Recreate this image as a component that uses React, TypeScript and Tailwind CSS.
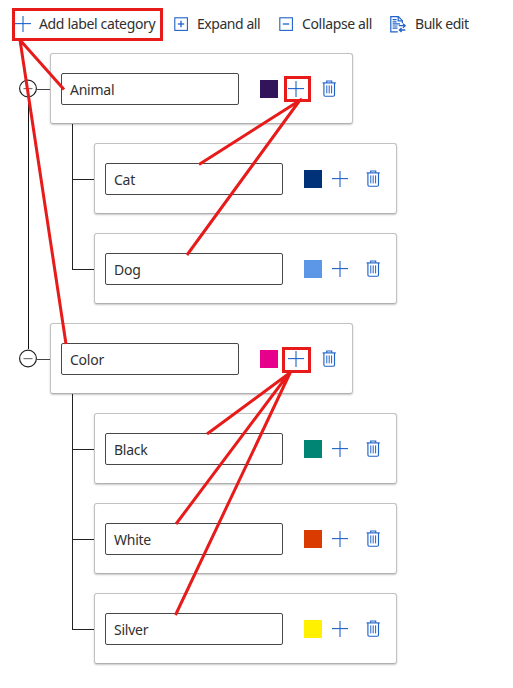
import type { ReactNode } from 'react';

const BLUE = '#1f62c9';

function PlusIcon() {
  return (
    <svg width="16" height="16" viewBox="0 0 16 16" className="block shrink-0" stroke={BLUE} fill="none">
      <path d="M0 7.6H16" strokeWidth="1.1" />
      <path d="M8 0V16" strokeWidth="1.1" />
    </svg>
  );
}

function BoxIcon({ plus }: { plus?: boolean }) {
  return (
    <svg width="14" height="14" viewBox="0 0 14 14" className="block shrink-0" stroke={BLUE} fill="none">
      <rect x="0.8" y="0.8" width="12.6" height="12.6" strokeWidth="1.1" />
      <path d="M3.8 7H10.2" strokeWidth="1.3" />
      {plus && <path d="M7 3.8V10.2" strokeWidth="1.3" />}
    </svg>
  );
}

function BulkIcon() {
  return (
    <svg width="16" height="17" viewBox="0 0 16 17" className="block shrink-0" stroke={BLUE} fill="none" strokeWidth="1.2">
      <path d="M7.8 15.9H0.8V0.7H8.4L12.4 4.7V7.2" />
      <path d="M8.2 0.9V4.8H12" />
      <path d="M2.6 3.7H6.6M2.6 5.8H6.6M2.6 7.9H10M2.6 10H7.5M2.6 12.1H7.5" />
      <path d="M8.8 9.7H15M13 7.7L15.2 9.7L13 11.7" strokeWidth="1.3" />
      <path d="M15.3 14H9.6M11.6 12L9.4 14L11.6 16" strokeWidth="1.3" />
    </svg>
  );
}

function TrashIcon() {
  return (
    <svg width="14" height="17" viewBox="0 0 14 17" className="block shrink-0" stroke={BLUE} fill="none" strokeWidth="1.15">
      <path d="M0.6 2.9H13.8" />
      <path d="M4.7 2.7V1H9.7V2.7" />
      <path d="M1.9 3V15Q1.9 16.2 3.2 16.2H11.2Q12.5 16.2 12.5 15V3" />
      <path d="M4.8 5.4V13.4M7.2 5.4V13.4M9.6 5.4V13.4" strokeWidth="1" />
    </svg>
  );
}

function Card({ name, swatch }: { name: string; swatch: string }) {
  return (
    <div className="flex h-[71px] w-[303px] shrink-0 items-center rounded-[3px] border border-[#c2c2c2] border-b-[#b0b0b0] pl-[10px] shadow-[0_1px_2px_rgba(0,0,0,0.22)]">
      <div className="flex h-8 w-[178px] items-center rounded-[2px] border border-[#484848] pl-2 pt-[2px] text-[14px] tracking-[-0.25px]">
        {name}
      </div>
      <div className={`ml-[21px] h-[18px] w-[18px] ${swatch}`} />
      <div className="ml-[10px]"><PlusIcon /></div>
      <div className="ml-[18px]"><TrashIcon /></div>
    </div>
  );
}

function Child({ name, swatch, last }: { name: string; swatch: string; last?: boolean }) {
  return (
    <div className="flex h-[90px]">
      <div className="ml-[22px] flex w-[22px] flex-col">
        <div className="h-[56px] shrink-0 border-b border-l border-[#222]" />
        {!last && <div className="flex-1 border-l border-[#222]" />}
      </div>
      <div className="pt-[19px]"><Card name={name} swatch={swatch} /></div>
    </div>
  );
}

function Group({ name, swatch, first, children }: { name: string; swatch: string; first?: boolean; children: ReactNode }) {
  return (
    <div className="flex">
      <div className="flex w-[50px] shrink-0 flex-col">
        <div className={`ml-[28px] h-[26px] ${first ? '' : 'border-l border-[#111]'}`} />
        <div className="flex h-[19px] items-center pl-[19px]">
          <svg width="18" height="19" viewBox="0 0 18 19" className="block shrink-0" fill="none">
            <circle cx="9" cy="9.5" r="8.4" stroke="#222" strokeWidth="1.2" />
            <path d="M4.5 9.6H13.5" stroke="#777" strokeWidth="1.2" />
          </svg>
          <div className="mt-px h-px flex-1 bg-[#444]" />
        </div>
        {first && <div className="ml-[28px] flex-1 border-l border-[#111]" />}
      </div>
      <div className={first ? 'pb-[19px]' : ''}>
        <Card name={name} swatch={swatch} />
        {children}
      </div>
    </div>
  );
}

function Annotations() {
  return (
    <svg className="pointer-events-none absolute left-0 top-0" width="513" height="688" fill="none" stroke="#e81b1b" strokeWidth="3">
      <rect x="13.5" y="9.5" width="148" height="30" />
      <path d="M20 40L64 89.5M20 40L66 344" />
      <rect x="285.5" y="77.5" width="24" height="23" />
      <path d="M302 99L199 164.5M300 100L187 255" />
      <rect x="283.5" y="348.5" width="26" height="23" />
      <path d="M291 372L207 434M290 372L176 524M290.5 372L175.5 615" />
    </svg>
  );
}

export default function App() {
  return (
    <div className="relative h-[688px] w-[513px] overflow-hidden bg-white font-['Noto_Sans','Open_Sans',sans-serif] text-[14px] text-[#303030]">
      <div className="flex h-[53px] items-start whitespace-nowrap pl-[15px] pt-[14px] leading-5">
        <div className="flex h-5 w-[159px] items-center gap-2">
          <PlusIcon />
          <span className="tracking-[-0.35px]">Add label category</span>
        </div>
        <div className="flex h-5 w-[105px] items-center gap-[9px]">
          <BoxIcon plus />
          <span className="tracking-[-0.45px]">Expand all</span>
        </div>
        <div className="flex h-5 w-[111px] items-center gap-[9px]">
          <BoxIcon />
          <span className="tracking-[-0.35px]">Collapse all</span>
        </div>
        <div className="flex h-5 items-center gap-[9px]">
          <BulkIcon />
          <span className="tracking-[-0.45px]">Bulk edit</span>
        </div>
      </div>
      <Group first name="Animal" swatch="bg-[#32145a]">
        <Child name="Cat" swatch="bg-[#00327a]" />
        <Child name="Dog" swatch="bg-[#5c96e6]" last />
      </Group>
      <Group name="Color" swatch="bg-[#e6008c]">
        <Child name="Black" swatch="bg-[#008575]" />
        <Child name="White" swatch="bg-[#da3b01]" />
        <Child name="Silver" swatch="bg-[#fff100]" last />
      </Group>
      <Annotations />
    </div>
  );
}
